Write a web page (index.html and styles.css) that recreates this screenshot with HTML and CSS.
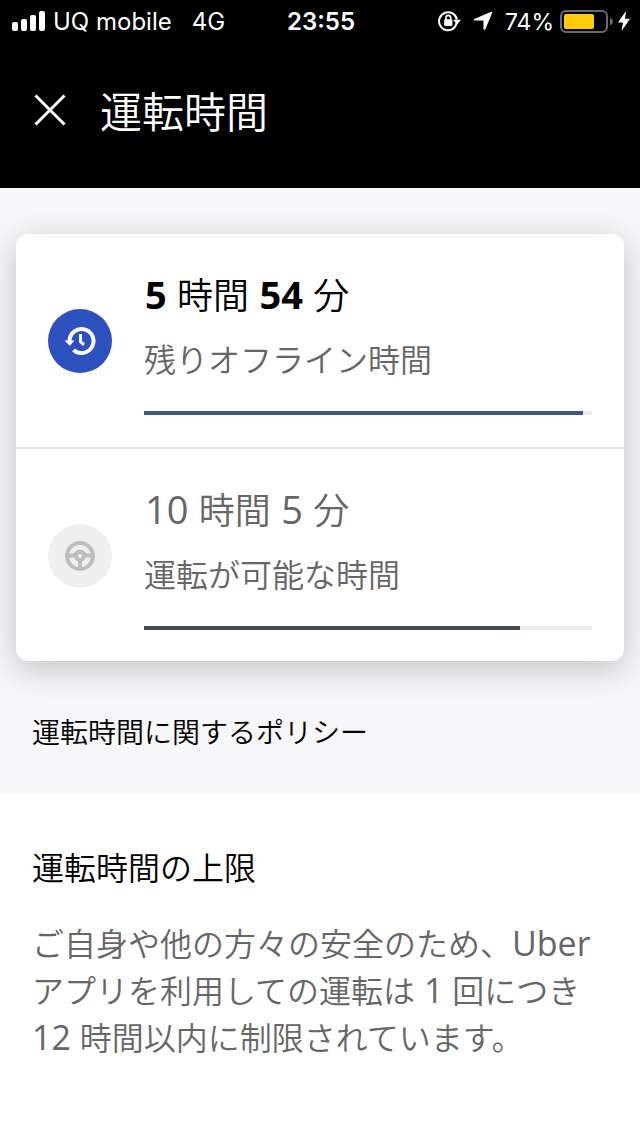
FILE: index.html
```html
<!DOCTYPE html>
<html lang="ja">
<head>
<meta charset="utf-8">
<meta name="viewport" content="width=device-width, initial-scale=1">
<title>運転時間</title>
<link rel="stylesheet" href="styles.css">
</head>
<body>
<header class="top">
  <div class="status">
    <div class="status-left">
      <svg class="signal" width="34" height="20" viewBox="0 0 34 20" fill="#fff" aria-hidden="true">
        <rect x="0" y="11" width="6" height="9" rx="2"/><rect x="9" y="8" width="6" height="12" rx="2"/><rect x="18" y="4" width="6" height="16" rx="2"/><rect x="27" y="0" width="6" height="20" rx="2"/>
      </svg>
      <span class="carrier">UQ mobile</span>
      <span>4G</span>
    </div>
    <span class="clock">23:55</span>
    <div class="status-right">
      <svg class="lock" width="24" height="22" viewBox="0 0 24 22" fill="none" stroke="#fff" stroke-width="2" aria-hidden="true">
        <path d="M15.200 18.700A9 9 0 1 1 18.900 9.500"/>
        <path d="M15.200 9.800h7.800L19 14.800z" fill="#fff" stroke="none"/>
        <path d="M18.600 13A9 9 0 0 1 14 19.300"/>
        <rect x="6.200" y="9.200" width="8.200" height="6.800" rx="1" fill="#fff" stroke="none"/>
        <path d="M7.900 10V7.800a2.400 2.400 0 0 1 4.800 0V10" stroke-width="1.600"/>
      </svg>
      <svg class="arrow" width="20" height="20" viewBox="0 0 20 20" fill="#fff" aria-hidden="true"><path d="M17.600 1Q19.800 0 19 2.300L12.300 18.300Q11.200 20 10.500 18V10.200Q10.400 9.600 9.800 9.500H2Q-.2 8.800 1.800 7.800z"/></svg>
      <span class="percent">74%</span>
      <svg class="battery" width="54" height="24" viewBox="0 0 54 24" aria-hidden="true">
        <rect x="1" y="2" width="46" height="21" rx="5" fill="none" stroke="#6d6a6d" stroke-width="2"/>
        <rect x="4" y="5" width="30" height="15" rx="2" fill="#ffcc0a"/>
        <path d="M50 8.500q3 1.500 3 4t-3 4z" fill="#6d6a6d"/>
      </svg>
      <svg class="bolt" width="12" height="20" viewBox="0 0 12 20" fill="#fff" aria-hidden="true"><path d="M8 0 0 11.500h5L3.500 20 12 7.800H7z"/></svg>
    </div>
  </div>
  <div class="bar">
    <button class="close" type="button" aria-label="閉じる">
      <svg width="32" height="32" viewBox="0 0 32 32" fill="none" stroke="#fff" stroke-width="3" aria-hidden="true"><path d="M1.500 1.500l29 29M30.500 1.500l-29 29"/></svg>
    </button>
    <h1 class="title">運転時間</h1>
  </div>
</header>
<main>
  <div class="summary">
    <div class="card">
      <section class="row">
        <div class="badge badge-blue">
          <svg width="32" height="32" viewBox="0 0 32 32" fill="none" aria-hidden="true">
            <path d="M5.500 16A12 12 0 1 1 9.500 25" stroke="#fff" stroke-width="4"/>
            <path d="M.5 15.500h10L5.800 20.800z" fill="#fff"/>
            <path d="M16.500 9v7.500l3.500 3.300" stroke="#fff" stroke-width="3"/>
          </svg>
        </div>
        <div class="info">
          <p class="time time-on"><strong>5</strong> 時間 <strong>54</strong> 分</p>
          <p class="label">残りオフライン時間</p>
          <div class="track"><div class="fill fill-blue" style="width:98%"></div></div>
        </div>
      </section>
      <section class="row">
        <div class="badge">
          <svg width="32" height="32" viewBox="0 0 32 32" fill="none" stroke="#bebebe" aria-hidden="true">
            <circle cx="16" cy="16" r="13" stroke-width="4"/>
            <circle cx="16" cy="16" r="4" stroke-width="4"/>
            <path d="M3 15.500h8M21 15.500h8M16 21v8" stroke-width="4"/>
            <path d="M10 15q2.500-4.500 6-4.500t6 4.500" stroke-width="2"/>
          </svg>
        </div>
        <div class="info">
          <p class="time"><span>10</span> 時間 <span>5</span> 分</p>
          <p class="label">運転が可能な時間</p>
          <div class="track"><div class="fill" style="width:84%"></div></div>
        </div>
      </section>
    </div>
    <a class="policy" href="#limit">運転時間に関するポリシー</a>
  </div>
  <section class="limit" id="limit">
    <h2 class="heading">運転時間の上限</h2>
    <p class="body">ご自身や他の方々の安全のため、<span>Uber</span> アプリを利用しての運転は<span> 1 </span>回につき <span>12 </span>時間以内に制限されています。</p>
  </section>
</main>
</body>
</html>
```
FILE: styles.css
```css
* { box-sizing: border-box; }
body {
  margin: 0;
  background: #fff;
  color: #000;
  font-family: "Open Sans", "Noto Sans CJK JP", sans-serif;
  font-weight: 350;
}
h1, h2, p { margin: 0; font-weight: 350; }

.top { background: #000; color: #fff; padding-bottom: 44px; }
.status {
  display: grid;
  grid-template-columns: 1fr auto 1fr;
  align-items: center;
  height: 40px;
  padding: 0 10px 0 12px;
  font: 400 24px/40px Inter, sans-serif;
}
.status-left, .status-right { display: flex; align-items: center; white-space: nowrap; }
.status span { padding-top: 2px; }
.status-right { justify-content: flex-end; }
.signal { margin-right: 7px; }
.carrier { margin-right: 20px; }
.clock { font-weight: 600; }
.lock { margin-right: 11px; }
.arrow { margin-right: 12px; }
.percent { font-size: 23px; }
.battery { margin: 0 4px 0 6px; }

.bar { display: flex; align-items: center; gap: 32px; height: 104px; padding: 36px 32px 0; }
.close { display: flex; padding: 2px; margin: 0; border: 0; background: none; }
.title {
  font-family: "Noto Sans CJK JP", sans-serif;
  font-size: 42px;
  line-height: 64px;
}

.summary { background: #f7f7fa; padding: 46px 16px 29px; }
.card {
  background: #fff;
  border-radius: 12px;
  box-shadow: 0 8px 32px rgba(0, 0, 0, .22);
}
.row { display: flex; align-items: center; gap: 32px; padding: 32px; }
.row + .row { border-top: 2px solid #e3e3e5; padding-bottom: 31px; }
.badge {
  display: flex;
  flex: none;
  align-items: center;
  justify-content: center;
  width: 64px;
  height: 64px;
  border-radius: 50%;
  background: #f0f0f0;
}
.badge-blue { background: #2c50bd; }
.info { flex: 1; min-width: 0; color: #666; }
.time { font-size: 36px; line-height: 60px; }
.time strong, .time span { margin: 0 1px; font-size: 38px; line-height: 1; font-weight: 400; }
.time strong { font-weight: 700; }
.time-on { color: #000; }
.label { margin-top: 2px; font-size: 32px; line-height: 64px; }
.track { height: 4px; margin-top: 19px; background: #ebebef; }
.fill { height: 100%; background: #424a50; }
.fill-blue { background: #3d5788; }

.policy {
  display: block;
  margin: 39px 16px 0;
  color: #000;
  font-size: 28px;
  line-height: 64px;
  text-decoration: none;
}

.limit { padding: 51px 32px 76px; }
.heading { font-size: 32px; line-height: 48px; }
.body { margin-top: 28px; color: #666; font-size: 32px; line-height: 47px; }
.body span { font-size: 34px; line-height: 1; font-weight: 400; }
```
